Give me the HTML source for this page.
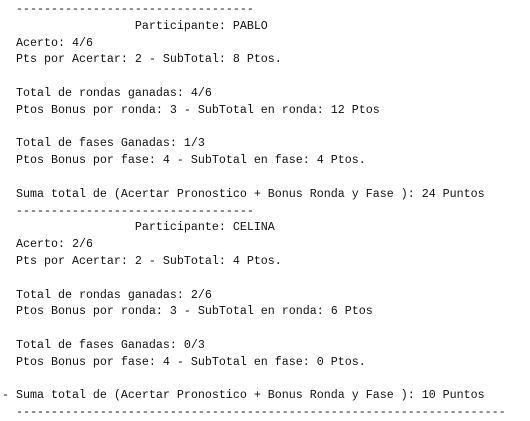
<html><head><style>
body{margin:0;background:#fff;width:530px;height:416px;overflow:hidden}
pre{margin:0;position:absolute;top:1px;left:2px;font-family:"Liberation Mono",monospace;font-size:11.67px;line-height:16.8px;color:#111}
</style></head><body><pre>  ----------------------------------
                   Participante: PABLO
  Acerto: 4/6
  Pts por Acertar: 2 - SubTotal: 8 Ptos.

  Total de rondas ganadas: 4/6
  Ptos Bonus por ronda: 3 - SubTotal en ronda: 12 Ptos

  Total de fases Ganadas: 1/3
  Ptos Bonus por fase: 4 - SubTotal en fase: 4 Ptos.

  Suma total de (Acertar Pronostico + Bonus Ronda y Fase ): 24 Puntos
  ----------------------------------
                   Participante: CELINA
  Acerto: 2/6
  Pts por Acertar: 2 - SubTotal: 4 Ptos.

  Total de rondas ganadas: 2/6
  Ptos Bonus por ronda: 3 - SubTotal en ronda: 6 Ptos

  Total de fases Ganadas: 0/3
  Ptos Bonus por fase: 4 - SubTotal en fase: 0 Ptos.

- Suma total de (Acertar Pronostico + Bonus Ronda y Fase ): 10 Puntos
  ----------------------------------------------------------------------
</pre></body></html>
